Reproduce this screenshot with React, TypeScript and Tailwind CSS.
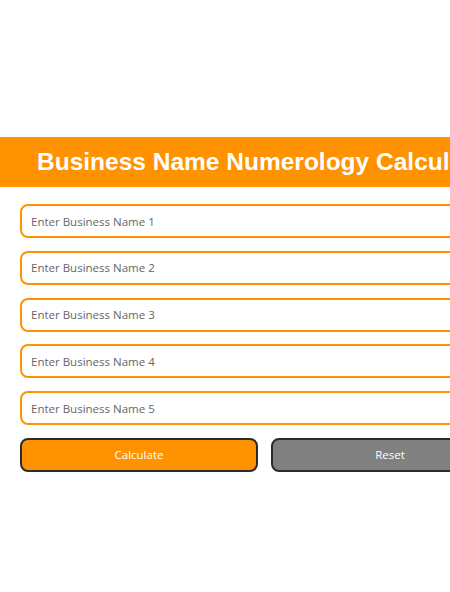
export default function App() {
  const fields = [1, 2, 3, 4, 5];
  return (
    <div className="h-[592px] w-[450px] overflow-hidden bg-white">
      <div className="w-[529px] pt-[137px]">
        <div className="flex h-[50px] items-center bg-[#ff9200] pl-[37px]">
          <h1 className="whitespace-nowrap font-['Liberation_Sans',Arial,sans-serif] text-[24.5px] font-bold text-white">
            Business Name Numerology Calculator
          </h1>
        </div>
        <div className="flex flex-col gap-[12.8px] px-5 pt-[17px]">
          {fields.map((n) => (
            <input
              key={n}
              type="text"
              placeholder={`Enter Business Name ${n}`}
              className="h-[34px] w-full rounded-lg border-2 border-[#ff9200] bg-white px-[9px] font-['Open_Sans',sans-serif] text-[11.5px] text-[#333] placeholder:text-[#666] focus:outline-none"
            />
          ))}
          <div className="flex gap-[13px]">
            <button className="h-[34px] flex-1 rounded-lg border-2 border-[#2b2b2b] bg-[#ff9200] font-['Open_Sans',sans-serif] text-[11.5px] font-medium text-white">
              Calculate
            </button>
            <button className="h-[34px] flex-1 rounded-lg border-2 border-[#2b2b2b] bg-[#808080] font-['Open_Sans',sans-serif] text-[11.5px] font-medium text-white">
              Reset
            </button>
          </div>
        </div>
      </div>
    </div>
  );
}
